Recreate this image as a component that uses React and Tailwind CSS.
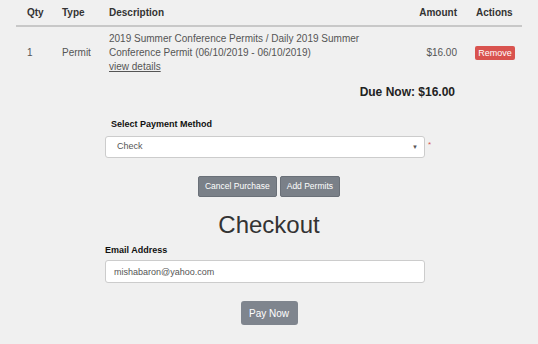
import { useState } from "react";

const ITEMS = [
  {
    qty: 1,
    type: "Permit",
    desc: "2019 Summer Conference Permits / Daily 2019 Summer Conference Permit (06/10/2019 - 06/10/2019)",
    amount: "$16.00",
  },
];

export default function App() {
  const [method] = useState("Check");
  const [email, setEmail] = useState("mishabaron@yahoo.com");

  return (
    <div className="min-h-screen w-[538px] h-[344px] bg-[#f0f0f0] font-['Liberation_Sans',Arial,sans-serif] text-[#333] overflow-hidden">
      {/* cart table */}
      <div className="mx-[16px] w-[506px]">
        <div className="grid grid-cols-[40px_47px_297px_70px_52px] h-[27px] items-center border-b-2 border-[#c8c8c8] text-[10px] font-bold">
          <div className="pl-[11px]">Qty</div>
          <div className="pl-[6px]">Type</div>
          <div className="pl-[6px]">Description</div>
          <div className="pr-[13px] text-right">Amount</div>
          <div className="pl-[6px]">Actions</div>
        </div>
        {ITEMS.map((it, i) => (
          <div
            key={i}
            className="grid grid-cols-[40px_47px_297px_70px_52px] items-center pt-[5px] pb-[2px] text-[10px] leading-[14px] text-[#555]"
          >
            <div className="pl-[11px]">{it.qty}</div>
            <div className="pl-[6px]">{it.type}</div>
            <div className="pl-[6px] pr-[36px]">
              <div>{it.desc}</div>
              <a href="#" className="underline">view details</a>
            </div>
            <div className="pr-[13px] text-right">{it.amount}</div>
            <div className="pl-[5px]">
              <button className="w-[40px] h-[14px] rounded-[2px] bg-[#d9534f] text-white text-[9px] leading-[14px]">
                Remove
              </button>
            </div>
          </div>
        ))}
      </div>

      <div className="w-[455px] text-right text-[12px] font-bold text-[#222] mt-[8px] leading-[16px]">
        Due Now: $16.00
      </div>

      {/* payment method */}
      <div className="ml-[105px] mt-[18px]">
        <div className="pl-[6px] text-[9px] font-bold text-[#111] leading-[12px]">Select Payment Method</div>
        <div className="flex items-start mt-[6px]">
          <div className="relative w-[320px] h-[22px] flex items-center bg-white border border-[#ccc] rounded-[3px] pl-[11px] text-[9px] text-[#555]">
            {method}
            <span className="absolute right-[6px] top-[7px] text-[6px] leading-[6px] text-[#555]">▼</span>
          </div>
          <span className="ml-[3px] mt-[3px] text-[8px] text-[#d9534f]">*</span>
        </div>
      </div>

      <div className="flex justify-center gap-[3px] mt-[18px]">
        <button className="h-[21px] px-[6px] rounded-[2px] bg-[#7a8088] text-white text-[8.5px] border border-[#6a7078]">
          Cancel Purchase
        </button>
        <button className="h-[21px] px-[6px] rounded-[2px] bg-[#7a8088] text-white text-[8.5px] border border-[#6a7078]">
          Add Permits
        </button>
      </div>

      <div className="text-center text-[24px] leading-[28px] text-[#333] mt-[14px]">Checkout</div>

      <div className="ml-[105px] mt-[5px]">
        <div className="text-[9px] font-bold text-[#111] leading-[12px]">Email Address</div>
        <input
          value={email}
          onChange={(e) => setEmail(e.target.value)}
          className="mt-[4px] w-[320px] h-[23px] bg-white border border-[#ccc] rounded-[3px] px-[8px] text-[9px] text-[#555] outline-none"
        />
      </div>

      <div className="flex justify-center mt-[18px]">
        <button className="w-[57px] h-[24px] rounded-[3px] bg-[#7f858e] text-white text-[10px]">Pay Now</button>
      </div>
    </div>
  );
}
